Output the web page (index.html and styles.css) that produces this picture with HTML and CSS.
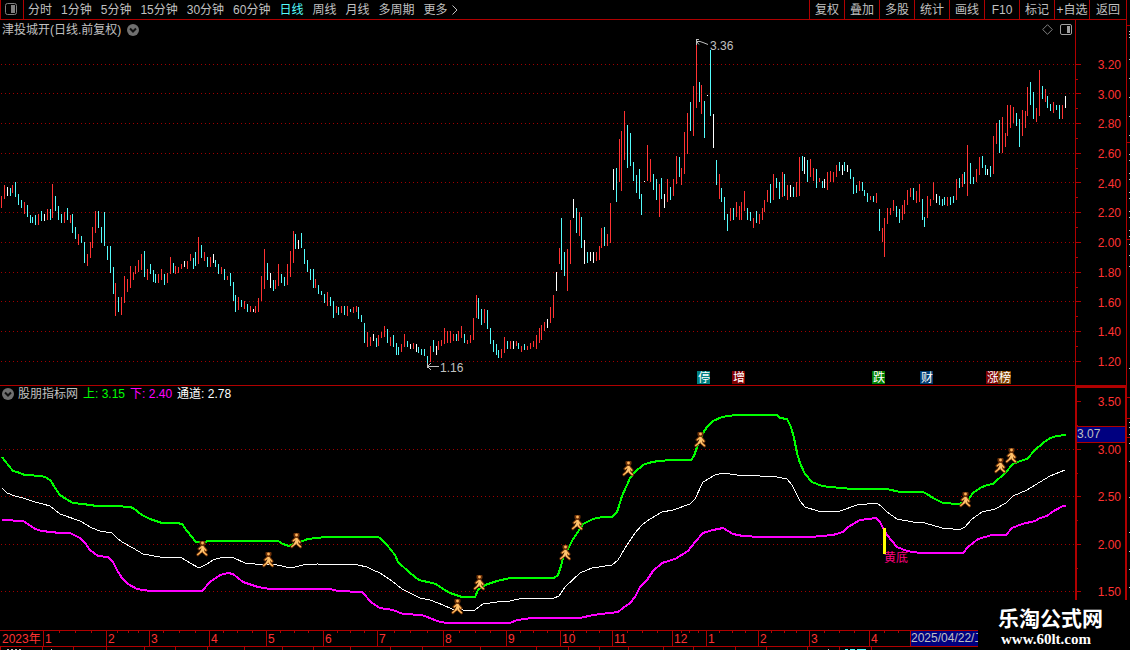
FILE: index.html
```html
<!DOCTYPE html>
<html lang="zh-CN">
<head>
<meta charset="utf-8">
<meta name="viewport" content="width=device-width, initial-scale=1">
<title>津投城开 日线</title>
<link rel="stylesheet" href="styles.css">
</head>
<body>
<main class="workspace">
  <nav class="toolbar">
    <button class="layout-toggle" type="button" aria-label="侧栏">
      <svg width="12" height="12" viewBox="0 0 12 12"><rect class="frame" x="0.5" y="0.5" width="11" height="11" rx="2"/><rect class="fill" x="6" y="2" width="4" height="8"/></svg>
    </button>
    <div class="periods">
      <button type="button">分时</button>
      <button type="button">1分钟</button>
      <button type="button">5分钟</button>
      <button type="button">15分钟</button>
      <button type="button">30分钟</button>
      <button type="button">60分钟</button>
      <button type="button" class="active">日线</button>
      <button type="button">周线</button>
      <button type="button">月线</button>
      <button type="button">多周期</button>
      <button type="button" class="more">更多<svg width="6" height="10" viewBox="0 0 6 10"><path d="M0.5 0.5L5 5L0.5 9.5"/></svg></button>
    </div>
    <div class="tools">
      <button type="button">复权</button>
      <button type="button">叠加</button>
      <button type="button">多股</button>
      <button type="button">统计</button>
      <button type="button">画线</button>
      <button type="button">F10</button>
      <button type="button">标记</button>
      <button type="button">+自选</button>
      <button type="button">返回</button>
    </div>
  </nav>

  <section class="panel price">
    <div class="plot">
      <header class="caption">
        <span>津投城开(日线.前复权)</span>
        <button type="button" class="round" aria-label="展开"><svg width="12" height="12" viewBox="0 0 12 12"><circle cx="6" cy="6" r="6"/><path d="M3 4.5L6 7.5L9 4.5"/></svg></button>
        <span class="corner">
          <svg width="11" height="11" viewBox="0 0 11 11"><path class="frame" d="M5.5 0.7L10.3 5.5L5.5 10.3L0.7 5.5Z"/></svg>
          <svg width="12" height="11" viewBox="0 0 12 11"><rect class="frame bright" x="0.5" y="0.5" width="11" height="10" rx="1.5"/><rect class="fill bright" x="7" y="2" width="3" height="7"/></svg>
        </span>
      </header>
      <svg class="canvas" viewBox="0 20 1075 365" preserveAspectRatio="none">
        <path class="grid" d="M1 64.5H1075M1 93.5H1075M1 123.5H1075M1 153.5H1075M1 182.5H1075M1 212.5H1075M1 242.5H1075M1 272.5H1075M1 301.5H1075M1 331.5H1075M1 361.5H1075"/>
        <path id="rise" class="candle rise"/>
        <path id="fall" class="candle fall"/>
        <path id="flat" class="candle flat"/>
        <path class="pointer" d="M696.5 45V40M696 39.5H699M697 41.5H700L703 42.5L708 44.5M697 42L699 44.5"/>
        <text class="note" x="710" y="50">3.36</text>
        <path class="pointer" d="M427 366.5H439M431 363L427.5 366.5L431 370M427.5 363V368"/>
        <text class="note" x="440" y="372">1.16</text>
        <g id="events"></g>
      </svg>
    </div>
    <div class="axis">
      <svg class="ticks" viewBox="0 20 50 365" preserveAspectRatio="none"><path d="M0 64.5H5M0 93.5H5M0 123.5H5M0 153.5H5M0 182.5H5M0 212.5H5M0 242.5H5M0 272.5H5M0 301.5H5M0 331.5H5M0 361.5H5M0 79.5H2M0 108.5H2M0 138.5H2M0 168.5H2M0 197.5H2M0 227.5H2M0 257.5H2M0 287.5H2M0 316.5H2M0 346.5H2"/></svg>
      <span>3.20</span><span>3.00</span><span>2.80</span><span>2.60</span><span>2.40</span><span>2.20</span><span>2.00</span><span>1.80</span><span>1.60</span><span>1.40</span><span>1.20</span>
    </div>
  </section>

  <section class="panel channel">
    <div class="plot">
      <header class="caption">
        <button type="button" class="round" aria-label="展开"><svg width="12" height="12" viewBox="0 0 12 12"><circle cx="6" cy="6" r="6"/><path d="M3 4.5L6 7.5L9 4.5"/></svg></button>
        <span>股朋指标网</span>
        <span class="upper">上: 3.15</span>
        <span class="lower">下: 2.40</span>
        <span class="middle">通道: 2.78</span>
      </header>
      <svg class="canvas" viewBox="0 386 1075 244" preserveAspectRatio="none">
        <defs>
          <symbol id="runner" viewBox="0 0 12 16">
            <g class="glow"><circle cx="6.5" cy="2" r="1.6"/><path d="M6.5 5L3 7.8M6.5 5L10 9.3M5.5 10L1.8 13.6M6.5 10L10.6 13.8"/></g>
            <g class="body"><circle cx="6.5" cy="2" r="1.4"/><path d="M6 5.6L3.4 7.8M7 6L9.8 9.2M5 11L1.8 13.5M7.5 11.2L10.4 13.6"/><path class="torso" d="M6 5L7.4 5L8.2 9L8.4 12L6.4 10.6L4.4 12L3.6 11.6L5 8.6Z"/></g>
          </symbol>
        </defs>
        <path class="grid" d="M1 449.5H1075M1 496.5H1075M1 544.5H1075M1 591.5H1075"/>
        <polyline class="line upper" points="2,457 5,461 13,471 17,472 25,475 42,476 47,478 51,481 55,488 60,495 66,499 73,503 83,504 97,506 115,506 130,507 133,508 142,515 150,519 162,523 177,523 182,524 187,531 196,542 203,542 210,541 278,541 283,544 289,546 293,544 300,542 308,539 325,537 378,537 380,538 387,545 395,555 398,562 410,573 419,580 436,584 443,589 450,593 462,597 475,597 478,590 485,585 497,581 510,578 554,578 558,575 561,566 563,558 568,549 573,539 580,529 583,524 593,519 602,517 612,517 617,512 619,506 622,496 627,485 630,478 635,472 643,465 648,463 658,461 673,460 691,460 694,456 697,447 703,433 707,427 713,421 722,417 735,415 777,415 780,418 787,419 791,427 794,438 797,453 800,463 805,474 812,482 822,486 830,487 853,489 887,489 900,492 923,492 927,494 933,498 943,503 958,504 967,502 970,497 973,493 980,488 987,485 993,484 1005,473 1013,464 1020,461 1027,459 1035,450 1043,443 1050,438 1057,436 1066,435"/>
        <polyline class="line middle" points="2,488 7,493 15,496 23,498 35,502 43,504 50,506 60,514 80,521 92,528 100,531 112,533 117,538 122,542 133,548 143,554 160,557 182,558 190,563 199,568 207,564 213,560 223,557 234,558 245,563 255,564 277,565 291,568 303,565 317,564 358,565 367,567 373,570 380,573 392,581 402,589 420,598 430,600 443,605 452,609 463,610 475,610 483,604 497,602 510,601 523,598 554,598 559,596 565,587 580,573 592,568 612,565 618,560 627,545 635,533 642,525 650,519 662,512 673,510 690,504 695,499 703,482 715,475 723,473 737,475 760,476 777,477 787,479 792,485 800,501 805,507 818,511 840,511 857,505 877,503 882,507 887,512 897,519 913,522 925,523 942,528 953,529 961,529 965,527 972,519 982,512 995,509 1006,503 1013,496 1027,490 1040,482 1050,476 1065,470"/>
        <polyline class="line lower" points="2,520 23,521 28,524 35,529 42,531 60,533 70,533 80,538 85,543 90,550 98,556 108,557 113,562 117,570 122,578 128,584 137,589 150,591 202,591 210,582 220,575 228,573 233,574 243,582 258,587 270,589 330,589 338,591 362,592 372,603 380,608 393,610 403,614 422,615 440,622 448,623 510,623 517,620 532,618 580,618 593,615 618,612 623,608 630,603 635,597 640,587 647,580 653,571 662,563 675,559 688,551 695,542 703,533 713,530 723,528 733,534 743,536 760,537 810,537 833,535 843,532 848,527 860,520 876,518 880,522 883,528 887,535 897,547 907,551 920,553 963,553 968,547 978,539 992,535 1006,535 1012,528 1022,524 1035,521 1040,518 1047,516 1052,512 1063,506 1066,506"/>
        <rect class="bottom-bar" x="883" y="528" width="3" height="26"/>
        <text class="bottom-text" x="884" y="562">黄底</text>
        <g id="signals"></g>
      </svg>
    </div>
    <div class="axis">
      <svg class="ticks" viewBox="0 388 48 242" preserveAspectRatio="none"><path d="M0 401.5H4M0 449.5H4M0 496.5H4M0 544.5H4M0 591.5H4M0 425.5H1M0 473.5H1M0 520.5H1M0 568.5H1"/></svg>
      <span>3.50</span><span>3.00</span><span>2.50</span><span>2.00</span><span>1.50</span>
      <output class="cursor-price">3.07</output>
    </div>
  </section>

  <footer class="timeline" id="timeline">
    <svg class="ticks" viewBox="0 631 1126 15" preserveAspectRatio="none"><path id="weeks"/></svg>
  </footer>
  <div class="next-row">
    <svg viewBox="0 647 1126 3" preserveAspectRatio="none">
      <path id="tabs" class="tab-lines"/>
      <path class="scrap" d="M7 649.5H9M11 649.5H13M15 649.5H17M19 649.5H21M51 649.5H52M828 649.5H829"/>
      <path class="scrap cyan" d="M845 649.5H848M850 649.5H855M857 649.5H866"/>
    </svg>
  </div>
</main>
<aside class="edge">
  <svg viewBox="0 0 3 650" preserveAspectRatio="none">
    <path class="rule" d="M0 25.5H3M0 142.5H3M0 239.5H3M0 397.5H3M0 418.5H3M0 437.5H3"/>
    <path class="scrap" d="M2 31.5H3M2 34.5H3M2 37.5H3M2 59.5H3M2 78.5H3M2 97.5H3M2 116.5H3M2 135.5H3M2 154.5H3M2 160.5H3M2 173.5H3M2 179.5H3M2 192.5H3M2 198.5H3M2 211.5H3M2 217.5H3M2 230.5H3M2 236.5H3M2 244.5H3M2 255.5H3M2 266.5H3M2 368.5H3M2 422.5H3M2 427.5H3M2 434.5H3M2 443.5H3M2 461.5H3M2 497.5H3M2 532.5H3M2 551.5H3M2 569.5H3M2 587.5H3"/>
  </svg>
</aside>
<div class="brand">
  <strong>乐淘公式网</strong>
  <a href="#">www.60lt.com</a>
</div>
<script src="chart.js"></script>
</body>
</html>
```

FILE: styles.css
```css
:root {
  --rule: #b00000;
  --red: #ff3232;
  --cyan: #54fcfc;
  --text: #c0c0c0;
}

* {
  box-sizing: border-box;
}

body {
  margin: 0;
  min-height: 100vh;
  display: flex;
  position: relative;
  overflow: hidden;
  background: #000;
  color: var(--text);
  font: 12px/16px "Liberation Sans", "Noto Sans CJK SC", sans-serif;
}

button {
  margin: 0;
  padding: 0;
  border: 0;
  background: none;
  color: inherit;
  font: inherit;
  white-space: nowrap;
  cursor: pointer;
}

svg {
  display: block;
}

.workspace {
  flex: 1;
  min-width: 0;
  display: grid;
  grid-template-columns: minmax(0, 1fr);
  grid-template-rows: 20px minmax(0, 366fr) minmax(0, 244fr) 17px 3px;
}

.toolbar {
  display: flex;
  border-bottom: 1px solid var(--rule);
}

.layout-toggle {
  width: 24px;
  padding: 0 0 1px 4px;
  border: solid var(--rule);
  border-width: 0 1px;
}

.frame {
  fill: none;
  stroke: #808080;
}

.fill {
  fill: #808080;
}

.bright.frame {
  stroke: #a0a0a0;
}

.bright.fill {
  fill: #a0a0a0;
}

.periods {
  display: flex;
  gap: 9px;
  padding-left: 4px;
}

.periods .active {
  color: var(--cyan);
}

.more {
  display: flex;
  align-items: center;
  gap: 4px;
}

.more path {
  fill: none;
  stroke: var(--text);
}

.tools {
  display: flex;
  margin-left: auto;
}

.tools button {
  width: 35px;
  border-left: 1px solid var(--rule);
}

.tools button:last-child {
  width: 37px;
}

.panel {
  display: flex;
  min-height: 0;
}

.price {
  border-bottom: 1px solid var(--rule);
}

.plot {
  flex: 1;
  min-width: 0;
  position: relative;
}

.canvas {
  width: 100%;
  height: 100%;
}

.caption {
  position: absolute;
  inset: 0 0 auto;
  display: flex;
  align-items: center;
  gap: 6px;
  height: 19px;
  padding-left: 2px;
}

.channel .caption {
  gap: 5px;
  height: 16px;
}

.channel .round {
  margin-right: -1px;
}

.round circle {
  fill: #707070;
}

.round path {
  fill: none;
  stroke: #101010;
  stroke-width: 2;
}

.corner {
  display: flex;
  gap: 7px;
  margin-left: auto;
  padding-right: 3px;
}

.caption .upper {
  color: #00ff00;
}

.caption .lower {
  color: #ff00ff;
}

.caption .middle {
  color: #fff;
}

.grid {
  fill: none;
  stroke: #a00000;
  stroke-dasharray: 1 3;
  shape-rendering: crispEdges;
}

.candle {
  fill: none;
  shape-rendering: crispEdges;
}

.rise {
  stroke: var(--red);
}

.fall {
  stroke: var(--cyan);
}

.flat {
  stroke: #fff;
}

.pointer {
  fill: none;
  stroke: var(--text);
}

.note {
  fill: var(--text);
}

.event text {
  fill: #fff;
}

.line {
  fill: none;
  stroke-width: 2;
  shape-rendering: crispEdges;
}

.line.upper {
  stroke: #00ff00;
}

.line.middle {
  stroke: #fff;
  stroke-width: 1;
}

.line.lower {
  stroke: #ff00ff;
}

.bottom-bar {
  fill: #ffff00;
}

.bottom-text {
  fill: #ff0080;
}

.glow circle,
.glow path {
  fill: none;
  stroke: #6b3008;
  stroke-width: 3;
  stroke-linecap: round;
}

.body circle {
  fill: #ffb45a;
}

.body path {
  fill: none;
  stroke: #ffb95c;
  stroke-width: 1.5;
  stroke-linecap: round;
}

.body .torso {
  fill: #ffc470;
  stroke: none;
}

.axis {
  position: relative;
  width: 51px;
  display: flex;
  flex-direction: column;
  justify-content: space-between;
  align-items: flex-end;
  padding: 37px 5px 15px 0;
  border-left: 1px solid var(--rule);
  color: var(--red);
}

.channel .axis {
  padding: 6px 4px 30px 0;
  border: solid var(--rule);
  border-width: 2px 1px 0 2px;
}

.ticks {
  position: absolute;
  inset: 0;
  width: 100%;
  height: 100%;
}

.ticks path {
  fill: none;
  stroke: var(--rule);
  shape-rendering: crispEdges;
}

.cursor-price {
  position: absolute;
  top: 38px;
  left: 0;
  right: 0;
  height: 17px;
  border: solid var(--rule);
  border-width: 1px 0;
  background: #000080;
  color: var(--text);
  line-height: 15px;
}

.timeline {
  position: relative;
  display: flex;
  border: solid var(--rule);
  border-width: 1px 0;
  color: var(--red);
}

.timeline span {
  flex: none;
  padding-left: 1px;
  border-left: 1px solid var(--rule);
  line-height: 16px;
  white-space: nowrap;
}

.timeline span:first-of-type {
  padding-left: 2px;
  border-left: 0;
}

.timeline .today {
  padding-left: 0;
  background: #000080;
  color: var(--text);
  line-height: 14px;
}

.next-row svg,
.edge svg {
  width: 100%;
  height: 100%;
}

.tab-lines,
.rule {
  stroke: var(--rule);
}

.scrap {
  stroke: #c0c0c0;
}

.scrap.cyan {
  stroke: var(--cyan);
}

.edge {
  width: 4px;
  border-left: 1px solid var(--rule);
}

.brand {
  position: absolute;
  right: 0;
  bottom: 0;
  width: 152px;
  height: 50px;
  padding: 7px 0 0 20px;
  background: #000;
  color: #fff;
}

.brand strong,
.brand a {
  display: block;
  white-space: nowrap;
}

.brand strong {
  font-size: 21px;
  line-height: 24px;
}

.brand a {
  padding-left: 3px;
  color: inherit;
  font: bold 15px/16px "Liberation Serif", serif;
  text-decoration: none;
}
```

FILE: chart.js
```js
// Daily bars: direction (r rise, c fall, w flat) + x, high, low.
const bars = `
r1,196,208 r4,185,199 w7,187,196 c10,188,196 r12,185,193 c15,182,197 c18,194,205 c21,200,208 r24,202,214 c27,205,217
c30,215,223 c32,217,223 c35,215,225 r38,214,225 c41,211,221 w44,214,221 r47,209,220 c50,209,220 r52,184,218 c55,196,211
c58,206,220 c61,214,223 r64,212,223 c67,208,220 r70,215,223 c72,214,233 c75,227,239 r78,234,245 c81,236,243 c84,242,263
r87,254,266 r90,242,258 r92,227,248 r95,211,233 c98,211,228 c101,227,243 c104,212,246 c107,246,260 c110,246,273 c113,267,294
r115,283,316 c118,297,312 r121,297,315 r124,276,303 r127,279,292 r130,266,288 r133,272,280 r135,266,274 r138,260,272 r141,254,270
c144,251,277 r147,269,280 c150,264,274 c153,270,282 c155,274,283 r158,274,283 r161,269,280 c164,274,285 r167,273,283 r170,257,274
c173,263,273 r175,266,274 r178,267,273 r181,264,269 w184,261,267 r187,261,269 r190,254,261 c193,258,269 c195,252,266 r198,237,264
c201,245,258 r204,252,261 c207,257,267 r210,257,267 w213,254,263 c215,260,267 c218,264,274 r221,267,274 c224,269,280 r227,276,280
c230,273,286 c233,282,301 c235,295,312 r238,297,310 c241,300,307 r244,301,309 c247,304,312 r250,306,312 w253,309,312 r255,306,313
r258,298,312 r261,276,301 r264,249,289 c267,263,280 w270,273,288 c273,280,291 r275,280,289 r278,264,286 c281,274,283 c284,277,286
r287,264,285 r290,251,277 r293,231,263 c295,234,249 w298,240,249 c301,233,248 c304,249,264 c307,260,272 c310,269,280 c313,269,288
r315,279,288 c318,285,294 c321,291,295 c324,294,303 r327,292,306 c330,297,306 c333,301,318 r336,306,313 c338,307,315 r341,306,313
c344,306,315 r347,306,316 c350,309,312 r353,307,313 r356,306,312 c358,307,319 c361,315,322 c364,323,343 r367,332,347 r370,337,346
w373,334,341 c376,338,347 r378,335,346 r381,332,338 r384,326,337 c387,329,343 r390,337,346 c393,335,347 c396,343,355 c398,347,355
r401,344,352 r404,334,347 c407,341,347 w410,344,349 r413,343,349 w416,344,352 c418,347,353 c421,349,355 c424,349,356 c427,356,368
r430,346,362 c433,340,352 w436,346,355 r438,341,350 r441,340,346 r444,328,344 r447,331,343 r450,331,343 r453,334,341 c456,334,341
r458,331,341 r461,326,338 c464,334,343 r467,340,344 r470,335,343 r473,318,340 r476,295,318 c478,298,319 c481,309,325 r484,309,323
c487,310,329 c490,328,344 c493,340,352 c496,344,355 c498,350,358 r501,349,358 r504,337,353 c507,341,349 r510,341,349 w513,341,349
r516,341,346 c518,343,349 r521,346,352 c524,344,350 r527,346,350 r530,343,349 r533,341,347 r536,335,349 r539,328,343 r541,325,340
r544,322,331 w547,319,328 r550,307,323 r553,295,318 w556,272,291 r559,248,264 c561,218,270 c564,252,276 r567,249,291 r570,220,264
w573,199,218 c576,208,233 r579,212,236 c581,217,248 w584,240,264 c587,252,263 w590,252,261 w593,252,263 r596,252,261 r599,246,260
r601,228,248 c604,227,246 r607,234,246 r610,203,243 w613,169,190 c616,168,202 r619,139,182 r621,131,191 r624,111,160 c627,125,168
c630,133,166 c633,162,181 c636,175,193 c639,169,199 c641,194,215 w644,181,182 r647,145,181 r650,159,182 c653,174,190 c656,179,200
r659,184,217 c661,178,199 w664,194,208 r667,179,202 c670,187,200 r673,179,196 r676,156,184 c679,157,177 r681,168,185 r684,132,174
r687,113,154 c690,102,131 r693,86,136 r696,43,108 c699,82,102 r701,85,114 c704,101,138 w707,95,96 c710,50,116 w713,114,148
c716,160,185 r719,174,199 c721,188,202 c724,197,220 c727,214,231 r730,208,221 c733,208,220 r736,202,217 r739,206,220 r741,202,220
r744,191,211 c747,208,220 c750,212,221 r753,218,228 c756,211,223 r759,214,224 r762,208,220 r764,200,212 r767,190,202 c770,184,203
r773,174,200 c776,178,188 c779,182,199 r782,172,197 c784,174,196 r787,185,200 w790,185,197 c793,187,197 r796,182,197 r799,157,196
c802,156,171 w804,157,174 c807,160,182 r810,159,177 r813,168,181 c816,169,188 r819,178,182 c822,181,188 w824,179,188 r827,172,190
r830,171,182 r833,172,182 r836,165,177 c839,162,171 w842,165,175 c844,162,171 w847,165,172 c850,169,179 c853,177,194 c856,185,193
r859,181,191 c862,182,191 c864,190,196 c867,193,202 r870,196,200 c873,196,202 r876,193,203 c879,209,231 r882,228,242 r884,218,257
r887,208,224 r890,208,215 r893,200,211 c896,206,217 c899,209,223 r902,205,220 r904,200,214 r907,190,205 r910,188,197 c913,188,200
r916,191,203 r919,184,202 c922,199,220 c924,217,227 r927,196,218 r930,199,206 r933,182,200 w936,194,203 c939,196,205 c942,199,206
c944,197,205 r947,197,206 c950,197,205 c953,196,203 r956,179,200 c959,178,188 r962,174,187 c964,172,184 r967,145,196 c970,163,184
c973,177,184 r976,169,182 r979,157,175 c982,156,168 c985,165,175 w987,169,175 c990,166,177 r993,136,174 r996,123,144 c999,120,153
r1002,117,153 r1005,133,147 r1007,105,136 r1010,105,128 r1013,107,123 c1016,113,126 c1019,119,147 r1022,110,136 r1025,111,128
r1027,87,116 c1030,82,105 c1033,92,119 r1036,108,122 r1039,70,116 c1042,86,99 r1045,89,102 c1047,96,108 c1050,104,111 r1053,102,113
c1056,105,110 c1059,105,119 r1062,105,119 w1065,96,108`.trim().split(/\s+/);

const paths = { r: '', c: '', w: '' };
for (const bar of bars) {
  const [x, high, low] = bar.slice(1).split(',').map(Number);
  paths[bar[0]] += `M${x + 0.5} ${high}V${low}`;
}
document.getElementById('rise').setAttribute('d', paths.r);
document.getElementById('fall').setAttribute('d', paths.c);
document.getElementById('flat').setAttribute('d', paths.w);

// Event badges under the price bars.
const events = [
  ['停', 697, '#008080'], ['增', 732, '#800000'], ['跌', 872, '#008000'],
  ['财', 920, '#003a70'], ['涨', 986, '#800000'], ['榜', 998, '#804000'],
];
document.getElementById('events').innerHTML = events.map(([label, x, color]) =>
  `<g class="event"><rect x="${x}" y="371" width="13" height="13" fill="${color}"/><text x="${x + 1}" y="382">${label}</text></g>`).join('');

// Runner signals on the channel lines: centre x, top y.
const signals = [[202, 541], [268, 552], [296, 533], [457, 599], [479, 575], [565, 545],
  [577, 515], [628, 461], [700, 432], [965, 492], [1000, 458], [1011, 448]];
document.getElementById('signals').innerHTML = signals.map(([x, y]) =>
  `<use href="#runner" x="${x - 6}" y="${y}" width="12" height="16"/>`).join('');

// Time scale: label and span of each month, as a share of the full scale.
const months = [['2023年', 43], ['1', 63], ['2', 43], ['3', 60], ['4', 57], ['5', 57], ['6', 54],
  ['7', 66], ['8', 63], ['9', 54], ['10', 52], ['11', 60], ['12', 34], ['1', 52], ['2', 51],
  ['3', 60], ['4', 41], ['2025/04/22/二', 216]];
const total = months.reduce((sum, month) => sum + month[1], 0);
document.getElementById('timeline').insertAdjacentHTML('beforeend', months.map(([label, span], i) =>
  `<span${i === months.length - 1 ? ' class="today"' : ''} style="width: ${span / total * 100}%">${label}</span>`).join(''));

const weeks = [59, 75, 91, 117, 128, 138, 163, 179, 195, 223, 237, 252, 280, 294, 308, 337, 350, 364,
  394, 410, 427, 459, 475, 490, 520, 533, 547, 573, 586, 599, 627, 642, 657, 681, 689, 698, 719, 732,
  745, 771, 784, 796, 824, 839, 854, 884, 898];
document.getElementById('weeks').setAttribute('d', weeks.map(x => `M${x + 0.5} 631V633`).join(''));

const tabs = [0, 42, 73, 106, 144, 175, 207, 244, 282, 313, 350, 390, 422, 480, 536, 568, 599, 628,
  663, 693, 735, 766, 807, 839, 871];
document.getElementById('tabs').setAttribute('d', tabs.map(x => `M${x + 0.5} 647V650`).join(''));
```
